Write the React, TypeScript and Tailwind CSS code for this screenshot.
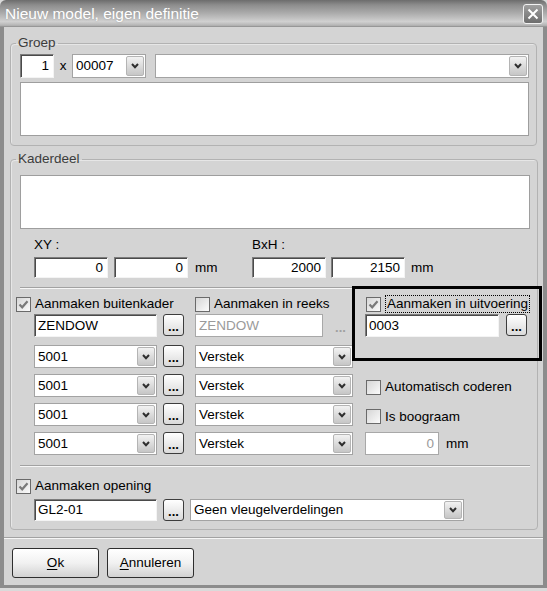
import type { ReactNode } from 'react';

function Chevron() {
  return (
    <svg width="8" height="6" viewBox="0 0 8 6" className="block">
      <path d="M1 1 L4 4.2 L7 1" fill="none" stroke="#2e2e2e" strokeWidth="2" />
    </svg>
  );
}

function DropButton() {
  return (
    <div className="flex w-[18px] items-center justify-center rounded-[2px] border border-[#b4b4b4] bg-linear-to-b from-[#f2f2f2] to-[#c6c6c6]">
      <Chevron />
    </div>
  );
}

function Combo({ value, className }: { value?: string; className: string }) {
  return (
    <div className={`flex items-stretch border border-[#a3a3a3] bg-white p-px ${className}`}>
      <span className="flex flex-1 items-center overflow-hidden whitespace-nowrap pl-[2px]">{value}</span>
      <DropButton />
    </div>
  );
}

function Field({
  value,
  className,
  right,
  disabled,
}: {
  value: string;
  className: string;
  right?: boolean;
  disabled?: boolean;
}) {
  const edge = disabled
    ? 'border border-[#a8a8a8] text-[#9a9a9a]'
    : 'border border-t-[#7c7c7c] border-l-[#7c7c7c] border-r-[#f4f4f4] border-b-[#f4f4f4] shadow-[inset_1px_1px_0_#4a4a4a]';
  return (
    <div
      className={`flex items-center bg-white ${edge} ${right ? 'justify-end pr-[4px]' : 'pl-[3px]'} ${className}`}
    >
      {value}
    </div>
  );
}

function Dots({ disabled }: { disabled?: boolean }) {
  if (disabled) {
    return (
      <div className="flex h-[22px] w-[17px] items-end justify-center pb-[3px] text-[13px] font-bold leading-[10px] text-[#a0a0a0]">
        ...
      </div>
    );
  }
  return (
    <div className="flex h-[22px] w-[21px] items-end justify-center rounded-[3px] border border-[#3c3c3c] bg-linear-to-b from-white to-[#dadada] pb-[3px] text-[13px] font-bold leading-[10px]">
      ...
    </div>
  );
}

function Check({ checked, label, focus }: { checked?: boolean; label: string; focus?: boolean }) {
  return (
    <div className="flex h-[18px] items-center gap-[4px]">
      <div className="h-[15px] w-[15px] shrink-0 border border-[#6a6a6a] bg-linear-to-br from-[#d6d6d6] to-[#fbfbfb]">
        {checked && (
          <svg width="13" height="13" viewBox="0 0 13 13" className="block">
            <path d="M2.5 6.5 L5.2 9.3 L10.5 3.2" fill="none" stroke="#7a7a7a" strokeWidth="2.2" />
          </svg>
        )}
      </div>
      <span
        className={
          focus
            ? 'whitespace-nowrap border border-dotted border-black px-px leading-[16px]'
            : 'whitespace-nowrap'
        }
      >
        {label}
      </span>
    </div>
  );
}

function Group({ title, className, children }: { title: string; className: string; children: ReactNode }) {
  return (
    <fieldset
      className={`mx-[6px] rounded-[4px] border border-[#b2b2b2] pl-[5px] pr-[7px] shadow-[inset_1px_1px_0_#e6e6e6] ${className}`}
    >
      <legend className="px-[2px] text-[#3c3c3c]">{title}</legend>
      {children}
    </fieldset>
  );
}

function Etched({ className }: { className: string }) {
  return <div className={`h-[2px] border-t border-b border-t-[#a2a2a2] border-b-[#f6f6f6] ${className}`} />;
}

function DialogButton({ first, rest }: { first: string; rest: string }) {
  return (
    <div className="flex h-[30px] w-[87px] items-center justify-center rounded-[3px] border border-[#2e2e2e] bg-linear-to-b from-white via-[#f1f1f1] to-[#d2d2d2]">
      <span>
        <span className="underline underline-offset-2">{first}</span>
        {rest}
      </span>
    </div>
  );
}

const frameRows = [0, 1, 2, 3];

export default function App() {
  return (
    <div className="relative h-[591px] w-[547px] overflow-hidden bg-[#dadada] font-['Liberation_Sans',Arial,sans-serif] text-[13.5px] leading-[16px] text-black">
      <div className="flex h-[588px] flex-col">
        <div className="flex h-[27px] shrink-0 items-center justify-between rounded-t-[6px] bg-[linear-gradient(180deg,#6c6c6c_0%,#8c8c8c_18%,#adadad_50%,#d0d0d0_80%,#b4b4b4_94%,#8a8a8a_100%)] pl-[5px] pr-[4px]">
          <span className="pt-px text-[15.5px] text-white [text-shadow:0_0_2px_#9a9a9a]">
            Nieuw model, eigen definitie
          </span>
          <div className="flex h-[20px] w-[20px] items-center justify-center rounded-[3px] border border-[#f2f2f2] bg-linear-to-b from-[#a0a0a0] to-[#6e6e6e]">
            <svg width="12" height="12" viewBox="0 0 12 12" className="block">
              <path d="M1.5 1.5 L10.5 10.5 M10.5 1.5 L1.5 10.5" stroke="#ffffff" strokeWidth="2" />
            </svg>
          </div>
        </div>

        <div className="flex flex-1 flex-col border-x-[4px] border-b-[3px] border-[#8c8c8c] bg-[#d4d4d4]">
          <Group title="Groep" className="mt-[8px] pb-[9px]">
            <div className="ml-[4px] mt-[3px] flex h-[24px] items-stretch">
              <Field value="1" right className="w-[34px]" />
              <span className="flex w-[18px] items-center justify-center">x</span>
              <Combo value="00007" className="w-[74px]" />
              <Combo className="ml-[9px] flex-1" />
            </div>
            <div className="ml-[4px] mt-[4px] h-[54px] border border-[#9e9e9e] bg-white" />
          </Group>

          <Group title="Kaderdeel" className="mt-[5px] pb-[8px]">
            <div className="ml-[4px] mt-[8px] h-[54px] border border-[#9e9e9e] bg-white" />

            <div className="ml-[18px] mt-[8px] flex">
              <div className="w-[218px]">
                <div className="h-[16px]">XY :</div>
                <div className="mt-[4px] flex h-[21px] items-stretch">
                  <Field value="0" right className="w-[74px]" />
                  <Field value="0" right className="ml-[6px] w-[74px]" />
                  <span className="ml-[7px] flex items-center">mm</span>
                </div>
              </div>
              <div>
                <div className="h-[16px]">BxH :</div>
                <div className="mt-[4px] flex h-[21px] items-stretch">
                  <Field value="2000" right className="w-[74px]" />
                  <Field value="2150" right className="ml-[5px] w-[74px]" />
                  <span className="ml-[6px] flex items-center">mm</span>
                </div>
              </div>
            </div>

            <Etched className="ml-[4px] mt-[9px]" />

            <div className="mt-[6px] flex">
              <div className="w-[179px]">
                <Check checked label="Aanmaken buitenkader" />
              </div>
              <div className="w-[170px]">
                <Check label="Aanmaken in reeks" />
              </div>
              <div className="ml-px">
                <Check checked focus label="Aanmaken in uitvoering" />
              </div>
            </div>

            <div className="mt-px flex h-[23px]">
              <div className="flex w-[179px] items-stretch gap-[6px] pl-[18px]">
                <Field value="ZENDOW" className="w-[123px]" />
                <Dots />
              </div>
              <div className="flex w-[170px] items-stretch gap-[9px]">
                <Field value="ZENDOW" disabled className="w-[128px]" />
                <Dots disabled />
              </div>
              <div className="flex items-stretch gap-[7px]">
                <Field value="0003" className="w-[134px]" />
                <Dots />
              </div>
            </div>

            <div className="mt-[8px] flex flex-col gap-[6px]">
              {frameRows.map((row) => (
                <div key={row} className="flex h-[23px]">
                  <div className="flex w-[179px] items-stretch gap-[6px] pl-[18px]">
                    <Combo value="5001" className="w-[123px]" />
                    <Dots />
                  </div>
                  <div className="flex w-[170px] items-stretch">
                    <Combo value="Verstek" className="w-[158px]" />
                  </div>
                  <div className="flex items-stretch">
                    {row === 1 && (
                      <div className="ml-px flex items-center pt-[3px]">
                        <Check label="Automatisch coderen" />
                      </div>
                    )}
                    {row === 2 && (
                      <div className="ml-px flex items-center pt-[4px]">
                        <Check label="Is boograam" />
                      </div>
                    )}
                    {row === 3 && (
                      <div className="flex items-stretch">
                        <Field value="0" right disabled className="w-[74px]" />
                        <span className="ml-[7px] flex items-center">mm</span>
                      </div>
                    )}
                  </div>
                </div>
              ))}
            </div>

            <Etched className="ml-[4px] mt-[10px]" />

            <div className="mt-[10px]">
              <Check checked label="Aanmaken opening" />
            </div>
            <div className="mt-[4px] flex h-[22px] items-stretch gap-[6px] pl-[18px]">
              <Field value="GL2-01" className="w-[123px]" />
              <Dots />
              <Combo value="Geen vleugelverdelingen" className="w-[274px]" />
            </div>
          </Group>

          <Etched className="mt-[7px]" />

          <div className="ml-[8px] mt-[9px] flex gap-[8px]">
            <DialogButton first="O" rest="k" />
            <DialogButton first="A" rest="nnuleren" />
          </div>
        </div>
      </div>

      <div className="pointer-events-none absolute left-[352px] top-[286px] h-[75px] w-[190px] border-[3px] border-black" />
    </div>
  );
}
